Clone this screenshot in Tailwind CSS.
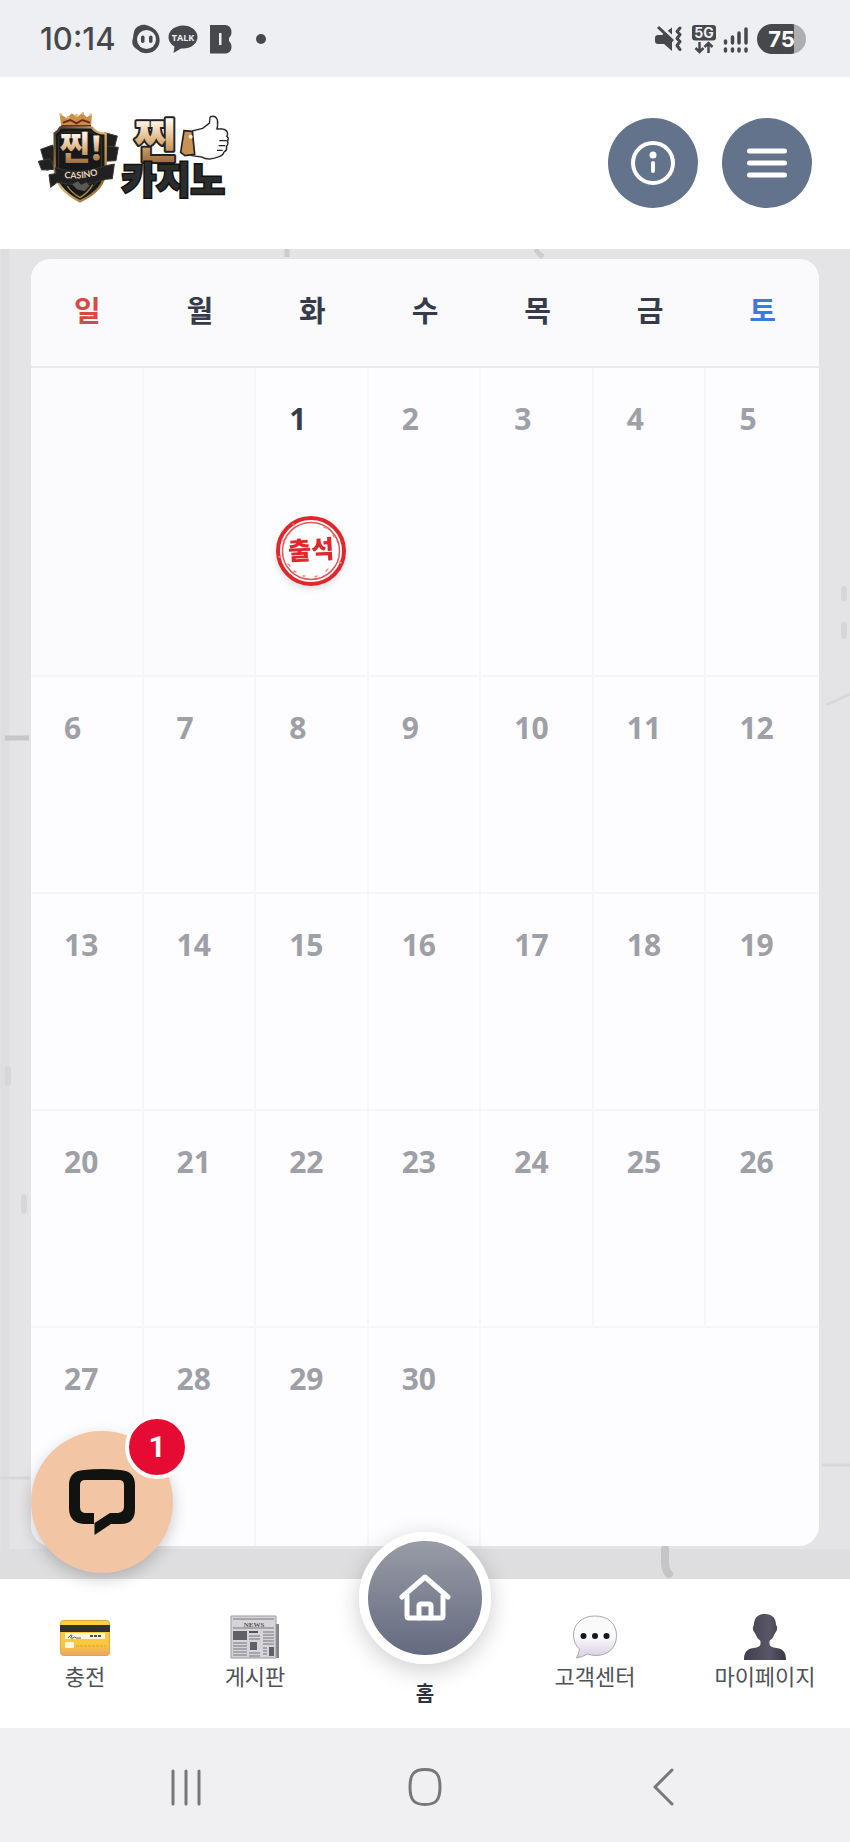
<!DOCTYPE html>
<html lang="ko">
<head>
    <meta charset="UTF-8">
    <meta name="viewport" content="width=device-width, initial-scale=1.0">
    <title>출석체크</title>
    <script src="https://cdn.jsdelivr.net/npm/@tailwindcss/browser@4"></script>
</head>
<body class="min-h-screen flex flex-col bg-white font-['Noto_Sans','Noto_Sans_CJK_KR',sans-serif]">
    <!-- status bar -->
    <div class="h-[77px] shrink-0 bg-[#eeeff3] flex items-center justify-between pl-10 pr-11 text-[#47484b]">
        <div class="flex items-center">
            <span class="font-['Inter',sans-serif] font-medium text-[31px] leading-8">10:14</span>
            <svg class="ml-4 w-7 h-[30px]" viewBox="0 0 28 30" fill="currentColor">
                <path d="M7 2C10 0 14 .5 18 2.500C21 4 23 5 25 8C28 12 29 19 25 24C21 30 11 31 6 26C1 23-1 20 1 14C2 8 2 4 7 2Z"/>
                <circle cx="14.500" cy="15.500" r="9.500" fill="#eeeff3"/>
                <rect x="9" y="11.500" width="3.500" height="7.500" rx="1.750"/>
                <rect x="17" y="11.500" width="3.500" height="7.500" rx="1.750"/>
            </svg>
            <svg class="ml-2 w-[30px] h-[30px]" viewBox="0 0 30 30" fill="currentColor">
                <path d="M15 1.500C7 1.500.500 6.500.500 13c0 4 2.500 7.500 6 9.500L5.500 29l7.500-4.500 2 .1c8 0 14.500-5 14.500-11.600S23 1.500 15 1.500Z"/>
                <text x="15" y="16.500" text-anchor="middle" font-family="Open Sans" font-weight="700" font-size="9" fill="#eeeff3">TALK</text>
            </svg>
            <svg class="ml-3 w-[22px] h-[30px]" viewBox="0 0 22 30" fill="currentColor">
                <path d="M0 1h15c4 0 6.500 3 6.500 7 0 3-1 4.500-2.500 6v3c1.500 1.500 2.500 3 2.500 6 0 4-2.500 6.500-6.500 6.500H0Z"/>
                <rect x="9" y="9" width="2.500" height="12" fill="#eeeff3"/>
            </svg>
            <span class="ml-6 size-[10px] rounded-full bg-[#47484b]"></span>
        </div>
        <div class="flex items-center">
            <svg class="w-7 h-[30px]" viewBox="0 0 28 30" fill="none" stroke="currentColor">
                <path d="M0 14q0-3 3-3h4L17 3.500V27l-8-7H3q-3 0-3-3Z" fill="currentColor" stroke="none"/>
                <path d="M4 .5l16 15" stroke="#eeeff3" stroke-width="3"/>
                <path d="M3 3l15 14" stroke-width="3"/>
                <path d="M25 4l-3 3.500 3 3-3 4 3 3-3 4 3 4" stroke-width="3" stroke-linejoin="round" stroke-linecap="round"/>
            </svg>
            <svg class="ml-2 w-[26px] h-[30px]" viewBox="0 0 26 30" fill="none" stroke="currentColor" stroke-width="2.500">
                <rect x="1" y="1" width="24" height="15.500" rx="3" fill="currentColor" stroke="none"/>
                <text x="13" y="14" text-anchor="middle" font-family="Inter" font-weight="700" font-size="14" fill="#eeeff3" stroke="none">5G</text>
                <path d="M8.500 18v10M4.500 24l4 4 4-4M17.500 29V19M13.500 23l4-4 4 4"/>
            </svg>
            <svg class="ml-1 w-7 h-[30px]" viewBox="0 0 28 30" stroke="currentColor" stroke-width="3.500" stroke-linecap="round">
                <path d="M4.500 17v2M11.500 13v6M18 9v10M25 5v14M4.500 25v2M11.500 25v2M18 25v2M25 25v2"/>
            </svg>
            <span class="ml-2 w-[49px] h-[30px] rounded-full overflow-hidden bg-linear-to-r from-[#47484b] from-75% to-[#adaeb2] to-75% text-white font-['Inter',sans-serif] font-bold text-[22px] leading-[30px] text-center">75</span>
        </div>
    </div>

    <header class="h-[172px] shrink-0 flex items-center justify-between pl-[30px] pr-[38px] bg-white">
        <a href="#" aria-label="찐카지노">
            <svg class="w-[210px] h-[110px]" viewBox="0 24 630 330">
                <defs>
                    <linearGradient id="gold" x1="0" y1="0" x2="0" y2="1">
                        <stop offset=".25" stop-color="#fff8ec"/>
                        <stop offset=".6" stop-color="#d8ab72"/>
                        <stop offset=".9" stop-color="#98683a"/>
                    </linearGradient>
                    <linearGradient id="rim" x1="0" y1="0" x2="1" y2="1">
                        <stop offset="0" stop-color="#403525"/>
                        <stop offset=".5" stop-color="#d9b66e"/>
                        <stop offset="1" stop-color="#7b5928"/>
                    </linearGradient>
                </defs>
                <!-- shield -->
                <g fill="#202020" stroke="#3c3a37" stroke-width="3">
                    <path d="M32 148l36-13 24 64-42 12Z"/>
                    <path d="M25 184l35-8 15 32-40 2Z"/>
                    <path d="M224 98l38 10-12 48-38-6Z"/>
                    <path d="M228 138l37 4-7 40-35 2Z"/>
                </g>
                <path d="M94 82l-5-40 22 13 14-15 17 11 15-13 13 14 16-10-3 40Z" fill="#c98d4c"/>
                <path d="M94 78h89M99 68l22-8 18 10 18-10 23 8" stroke="#6d2a1c" stroke-width="6" fill="none"/>
                <g fill="#e5bb75"><circle cx="92" cy="43" r="4"/><circle cx="114" cy="52" r="4"/><circle cx="140" cy="46" r="5"/><circle cx="158" cy="40" r="4"/><circle cx="182" cy="44" r="4"/></g>
                <path d="M91 82h94q12 18 42 19v105q0 62-77 98-76-38-76-98V100q10-4 17-18Z" fill="#16181b" stroke="url(#rim)" stroke-width="7"/>
                <path d="M97 96h87q10 12 30 16v88q0 56-64 90-64-34-64-90v-91q8-4 11-13Z" fill="none" stroke="#3f3524" stroke-width="3"/>
                <text x="154" y="180" text-anchor="middle" font-family="Noto Sans CJK KR" font-size="98" font-weight="900" fill="url(#gold)">찐!</text>
                <path d="M76 203q75 25 151-6l26-5-6 44-20 2q-74 26-145 9l-20 15-5-38 21-3Z" fill="#202122" stroke="#39332a" stroke-width="3"/>
                <path id="ribbon" d="M82 231q72 14 142-13" fill="none"/>
                <text font-family="Lato" font-size="27" font-weight="700" fill="#e4d3b4"><textPath href="#ribbon" startOffset="50%" text-anchor="middle">CASINO</textPath></text>
                <path d="M126 253l18-9 10 11 15-8 10 10-15 17-23-6Z" fill="#595955"/>
                <path d="M112 258q15 23 38 35 24-14 38-39" stroke="#ae8647" stroke-width="4" fill="none"/>
                <!-- wordmark -->
                <text x="376" y="170" text-anchor="middle" font-family="Noto Sans CJK KR" font-size="138" font-weight="900" fill="url(#gold)" stroke="#222" stroke-width="12" stroke-linejoin="round" paint-order="stroke">찐</text>
                <path d="M490 95l29-7 22-17 2-18q12-4 16 7 3 12-2 30h18q14 1 15 12l-3 7q8 5 2 15 5 7-3 15 4 10-6 15-3 11-16 14-29 12-48 0l-30-4Z" fill="#fff" stroke="#222" stroke-width="10" stroke-linejoin="round"/>
                <path d="M490 95l29-7 22-17 2-18q12-4 16 7 3 12-2 30h18q14 1 15 12l-3 7q8 5 2 15 5 7-3 15 4 10-6 15-3 11-16 14-29 12-48 0l-30-4Z" fill="#fff" stroke="#fff" stroke-width="2"/>
                <path d="M590 122h-22M586 137h-20M578 151h-17" stroke="#222" stroke-width="4"/>
                <path d="M462 92l25 2 7 69-29 4-13-10Z" fill="#c99153" stroke="#222" stroke-width="5"/>
                <circle cx="482" cy="110" r="6" fill="#fff2d8"/>
                <text x="430" y="281" text-anchor="middle" font-family="Noto Sans CJK KR" font-size="112" font-weight="900" fill="#2b2c2e" stroke="#111" stroke-width="9" paint-order="stroke">카지노</text>
            </svg>
        </a>
        <div class="flex gap-6">
            <button type="button" aria-label="정보" class="size-[90px] rounded-full bg-[#62738b] flex items-center justify-center">
                <svg class="size-11" viewBox="0 0 44 44" fill="none" stroke="#fff" stroke-width="4" stroke-linecap="round">
                    <circle cx="22" cy="22" r="20"/>
                    <circle cx="22" cy="14" r="3.500" fill="#fff" stroke="none"/>
                    <path d="M22 22v8"/>
                </svg>
            </button>
            <button type="button" aria-label="메뉴" class="size-[90px] rounded-full bg-[#62738b] flex items-center justify-center">
                <svg class="size-11" viewBox="0 0 44 44" stroke="#fff" stroke-width="5" stroke-linecap="round">
                    <path d="M4.500 10h35M4.500 22h35M4.500 34h35"/>
                </svg>
            </button>
        </div>
    </header>

    <main class="relative grow bg-[#e4e3e6] px-[31px] pt-[10px] pb-[33px]">
        <!-- brick joints behind the card -->
        <svg class="absolute inset-0 w-full h-full" viewBox="0 0 850 1330" preserveAspectRatio="none" fill="none">
            <path d="M5 0V1330" stroke="#dedde0" stroke-width="9"/>
            <path d="M0 1300H850V1330H0Z" fill="#dedee0"/>
            <path d="M287 0v8M536 0q2 5 7 8" stroke="#cdccd0" stroke-width="5"/>
            <path d="M5 489h24" stroke="#c7c6c9" stroke-width="5"/>
            <path d="M0 1229h30M822 1216h28M826 456l24-11" stroke="#d8d7da" stroke-width="3"/>
            <path d="M844 340v9M844 376v11M8 820v14M24 948v14" stroke="#d7d6da" stroke-width="6" stroke-linecap="round"/>
            <path d="M665 1300v13q0 8 4 12" stroke="#c5c5c7" stroke-width="8" stroke-linecap="round"/>
        </svg>

        <div class="relative rounded-[20px] overflow-hidden bg-[#fdfcfe]">
            <table class="w-full table-fixed border-separate border-spacing-0">
                <thead>
                    <tr class="h-[109px] bg-[#fafafd] text-[29px] leading-10 text-[#363b4b]">
                        <th class="border-b-2 border-[#e9e8ec] pb-1 font-bold text-[#d94848]">일</th>
                        <th class="border-b-2 border-[#e9e8ec] pb-1 font-bold">월</th>
                        <th class="border-b-2 border-[#e9e8ec] pb-1 font-bold">화</th>
                        <th class="border-b-2 border-[#e9e8ec] pb-1 font-bold">수</th>
                        <th class="border-b-2 border-[#e9e8ec] pb-1 font-bold">목</th>
                        <th class="border-b-2 border-[#e9e8ec] pb-1 font-bold">금</th>
                        <th class="border-b-2 border-[#e9e8ec] pb-1 font-bold text-[#3c7bdc]">토</th>
                    </tr>
                </thead>
                <tbody id="days" class="text-[30px] leading-10 font-bold text-[#9da0a6]"></tbody>
            </table>
        </div>

        <button type="button" aria-label="채팅 상담" class="absolute z-10 left-[31px] bottom-[6px] size-[142px] rounded-full bg-[#f2c5a5] shadow-[0_6px_16px_rgba(0,0,0,0.2)] flex items-center justify-center">
            <svg class="size-[66px]" viewBox="0 0 66 66">
                <path d="M15 1Q33-1 51 1Q66 2 66 16V40Q66 55 52 55H42L25.500 66V54L41 44H49Q55 43 55 38V16Q55 11 50 11H16Q11 11 11 16V38Q11 44 17 44H25V55H15Q0 54 0 39V16Q0 2 15 1Z" fill="#10130f"/>
            </svg>
            <span class="absolute -top-4 -right-4 size-16 rounded-full border-4 border-white bg-[#e60b33] text-white font-['Roboto'] font-bold text-[30px] leading-14 text-center">1</span>
        </button>
    </main>

    <nav class="relative h-[149px] shrink-0 bg-white grid grid-cols-5 text-[22px] leading-7 text-[#4f5257]">
        <a href="#" class="flex flex-col items-center pt-[33px]">
            <svg class="w-[50px] h-[50px]" viewBox="0 0 50 50">
                <defs><linearGradient id="card" x1="0" y1="0" x2="0" y2="1"><stop offset="0" stop-color="#f9d13c"/><stop offset=".7" stop-color="#fac63f"/><stop offset="1" stop-color="#eda464"/></linearGradient></defs>
                <rect x=".5" y="8.500" width="49" height="35" rx="3" fill="url(#card)" stroke="#d9a94a"/>
                <path d="M0 13h50v7H0Z" fill="#303030"/>
                <rect x="5" y="21" width="40" height="6" fill="#fff6d8"/>
                <path d="M8 26q4-5 4-2-3 3 1 2 2-2 3 0h5" stroke="#655c4d" fill="none"/>
                <path d="M30 24h12" stroke="#524c40" stroke-width="2" stroke-dasharray="3 1"/>
                <rect x="5" y="30" width="9" height="6" rx="1" fill="#fff7de"/>
                <path d="M16 34h30" stroke="#e9b338" stroke-width="2" stroke-dasharray="3 1"/>
            </svg>
            충전
        </a>
        <a href="#" class="flex flex-col items-center pt-[33px]">
            <svg class="w-[50px] h-[50px]" viewBox="0 0 50 50">
                <path d="M42 12h7v34H36Z" fill="#85828a"/>
                <path d="M1 4h45v42H1Z" fill="#d6d4d8" stroke="#9b989f"/>
                <path d="M3 7h41M3 16h41" stroke="#777" />
                <text x="24" y="14.500" text-anchor="middle" font-family="Liberation Serif" font-size="7" font-weight="700" fill="#555">NEWS</text>
                <path d="M3 19h14v9H3ZM20 30h7v8h-7ZM39 35h5v9h-5Z" fill="#626067"/>
                <path d="M19 20h9" stroke="#555" stroke-width="2"/>
                <path d="M19 24h11M19 27h11M33 20h11M33 23h11M33 26h11M33 29h11M33 32h11M3 31h14M3 34h14M3 37h14M3 40h14M3 43h14M19 41h11M19 44h11M33 36h4M33 39h4M33 42h4" stroke="#97949b" stroke-width="1.500"/>
            </svg>
            게시판
        </a>
        <a href="#" class="flex flex-col items-center justify-end pb-5 font-bold text-xl leading-7 text-[#2c3340]">
            <span class="absolute -top-[47px] size-[132px] rounded-full border-9 border-white bg-linear-to-b from-[#989ca5] to-[#656b80] shadow-[0_6px_24px_rgba(0,0,0,0.2)] flex items-center justify-center">
                <svg class="w-[52px] h-12" viewBox="0 0 52 48" fill="none" stroke="#fff" stroke-width="5" stroke-linejoin="round" stroke-linecap="round">
                    <path d="M3 23L26 3l23 20"/>
                    <path d="M8 22v20q0 2 2 2h32q2 0 2-2V22"/>
                    <path d="M20 44V32q0-2 2-2h8q2 0 2 2v12"/>
                </svg>
            </span>
            홈
        </a>
        <a href="#" class="flex flex-col items-center pt-[33px]">
            <svg class="w-[50px] h-[50px]" viewBox="0 0 50 50">
                <defs><linearGradient id="bubble" x1="0" y1="0" x2="0" y2="1"><stop offset=".5" stop-color="#fafafa"/><stop offset="1" stop-color="#d9cbe6"/></linearGradient></defs>
                <path d="M25 4C12 4 3.500 12 3.500 23q0 9 6 14-1 5-3 9 6-1 11-4 4 1.500 8 1.500c13 0 21-8 21-20S38 4 25 4Z" fill="url(#bubble)" stroke="#aaa7ae"/>
                <g fill="#18161a"><circle cx="13.500" cy="24" r="3"/><circle cx="25" cy="24" r="3"/><circle cx="36.500" cy="24" r="3"/></g>
            </svg>
            고객센터
        </a>
        <a href="#" class="flex flex-col items-center pt-[33px]">
            <svg class="w-[50px] h-[50px]" viewBox="0 0 50 50">
                <defs><linearGradient id="bust"><stop offset="0" stop-color="#403f50"/><stop offset=".6" stop-color="#595766"/><stop offset="1" stop-color="#393649"/></linearGradient></defs>
                <path d="M25 2C17 2 14 7 14 13q-2 2-.500 6l2 3q1 4 5 7v3q0 3-7 4C6 37 4 41 4 48h42c0-7-2-11-9.500-12q-7-1-7-4v-3q4-3 5-7l2-3q1.500-4-.500-6C36 7 33 2 25 2Z" fill="url(#bust)"/>
            </svg>
            마이페이지
        </a>
    </nav>

    <!-- system navigation -->
    <div class="h-[114px] shrink-0 bg-[#f0eff2] flex items-center justify-between px-[168px] pt-1">
        <button type="button" aria-label="최근 앱">
            <svg class="w-9 h-10" viewBox="0 0 36 40" stroke="#77767a" stroke-width="3" stroke-linecap="round"><path d="M5 4v33M18 4v33M31 4v33"/></svg>
        </button>
        <button type="button" aria-label="홈 화면">
            <svg class="w-10 h-10" viewBox="0 0 40 40" fill="none" stroke="#77767a" stroke-width="3"><path d="M20 2.500C31 2.500 35 7 35 20S31 37.500 20 37.500 5 33 5 20 9 2.500 20 2.500Z"/></svg>
        </button>
        <button type="button" aria-label="뒤로">
            <svg class="w-9 h-10" viewBox="0 0 36 40" fill="none" stroke="#77767a" stroke-width="3" stroke-linecap="round" stroke-linejoin="round"><path d="M26 3L9 20l17 17"/></svg>
        </button>
    </div>

    <script>
        const FIRST_DAY = 2;
        const LAST_DATE = 30;
        const TODAY = 1;

        const stamp = `
            <svg class="size-[72px] mx-auto mt-[76px] drop-shadow-md" viewBox="0 0 72 72" role="img">
                <circle cx="36" cy="36" r="33" fill="#fff" stroke="#df272c" stroke-width="4"/>
                <circle cx="36" cy="36" r="28.500" fill="none" stroke="#e35457" stroke-width="1.500"/>
                <path d="M13 49l2 2M19 56l2 1M28 61h2M40 62l2-1M51 56l2-2M58 20l1 2M49 12l2 1M7 25l2 1M4 42l2-1M18 9l1 2M64 47l2 1" stroke="#e98b8c" stroke-width="1.500" stroke-linecap="round"/>
                <text x="36" y="44" text-anchor="middle" font-family="Noto Sans CJK KR" font-weight="900" font-size="25" fill="#df272c" transform="rotate(-3 36 36)">출석</text>
            </svg>`;

        const rowHeights = ['h-[309px]', 'h-[217px]', 'h-[217px]', 'h-[217px]', 'h-[218px]'];

        let html = '';
        for (let week = 0; week < 5; week++) {
            html += `<tr class="${rowHeights[week]} align-top">`;
            for (let col = 0; col < 7; col++) {
                const date = week * 7 + col - FIRST_DAY + 1;
                if (date < 1) {
                    html += '<td class="border-r-2 border-b-2 border-[#f6f5f9] bg-[#fbfafd]"></td>';
                } else if (date > LAST_DATE) {
                    html += '<td></td>';
                } else {
                    const border = (col < 6 ? 'border-r-2 ' : '') + (week < 4 ? 'border-b-2 ' : '');
                    html += `<td class="${border}border-[#f6f5f9] pt-[31px]">
                        <div class="pl-[33px] ${date === TODAY ? 'text-[#363b4b]' : ''}">${date}</div>
                        ${date === TODAY ? stamp : ''}
                    </td>`;
                }
            }
            html += '</tr>';
        }
        document.getElementById('days').innerHTML = html;
    </script>
</body>
</html>
